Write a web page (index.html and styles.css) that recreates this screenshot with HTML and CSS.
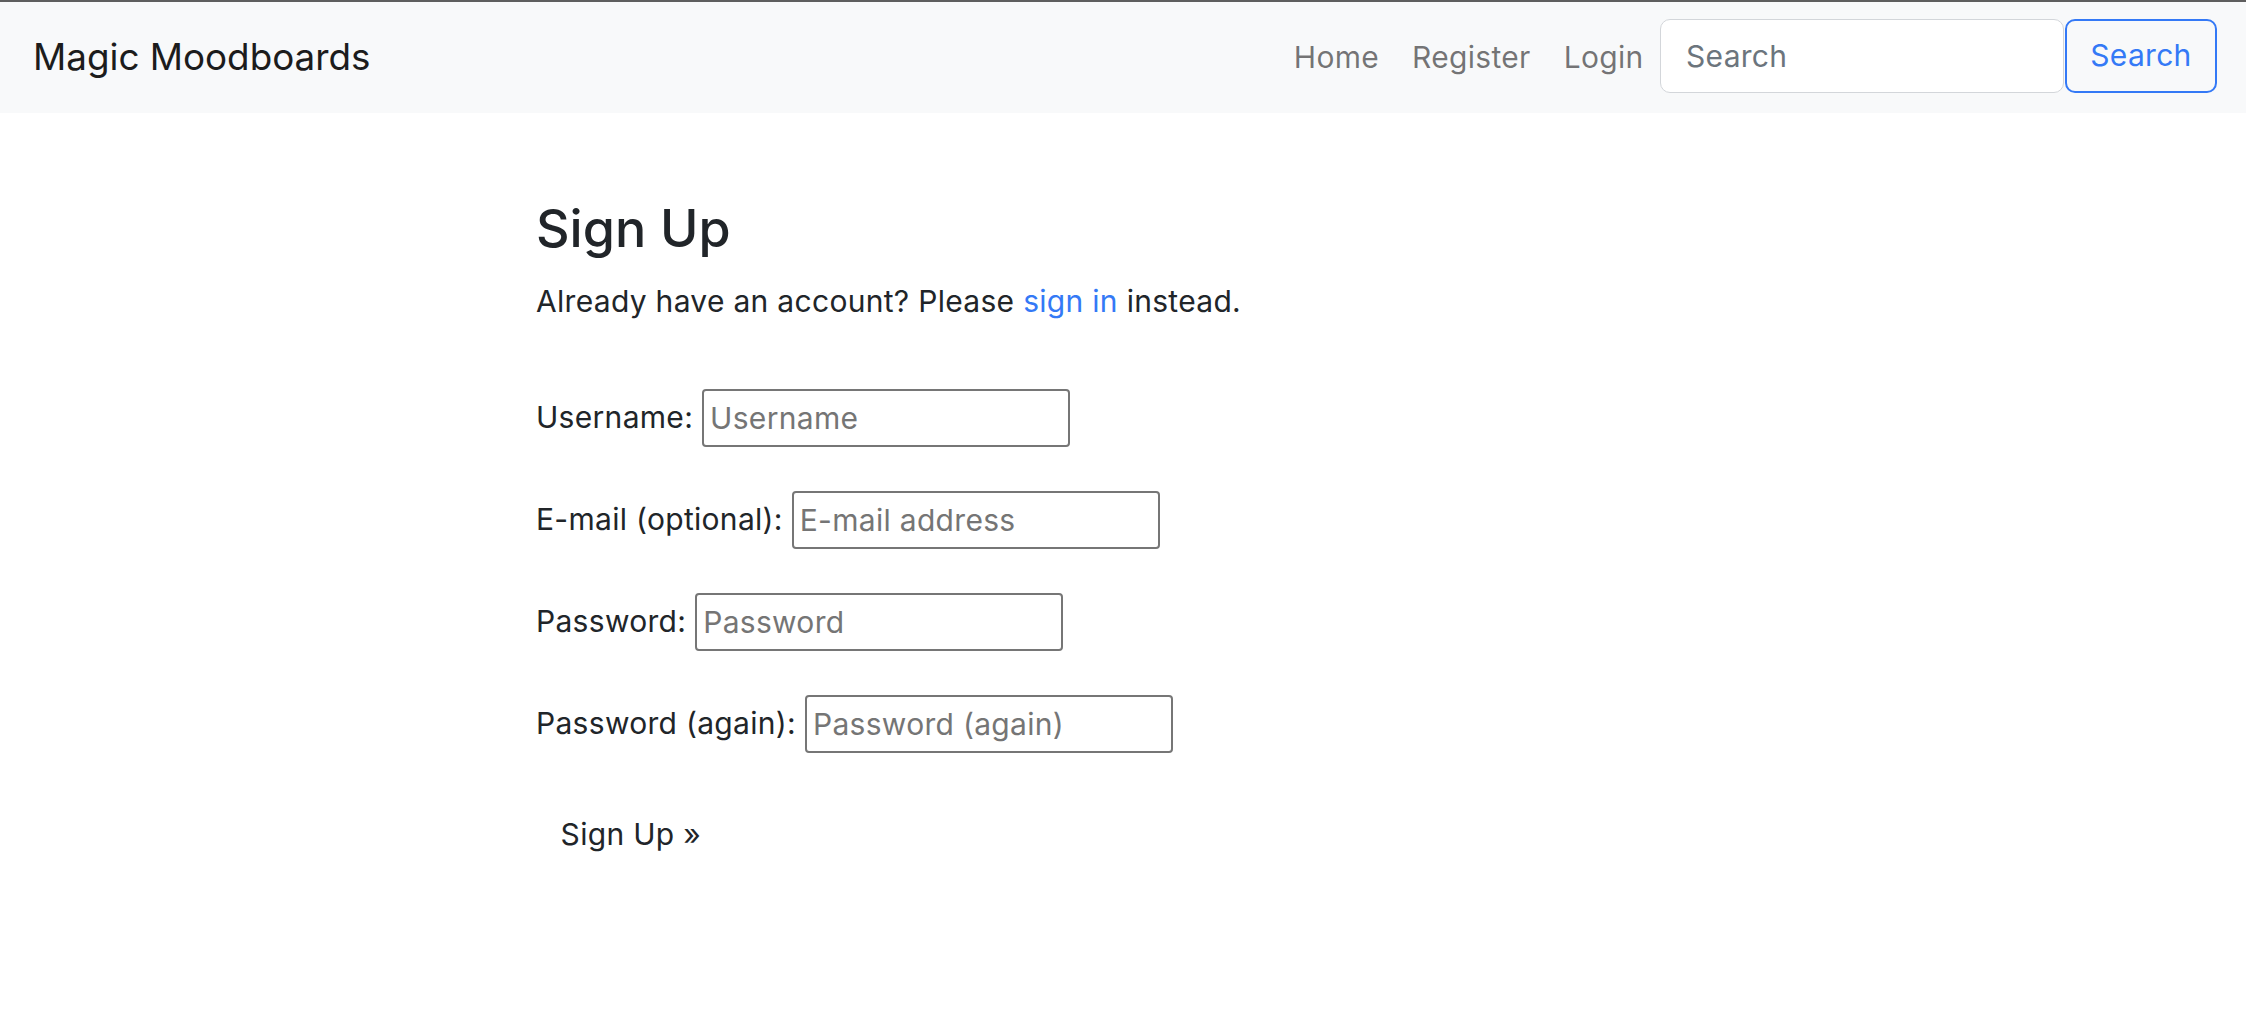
FILE: index.html
```html
<!DOCTYPE html>
<html lang="en">
<head>
<meta charset="utf-8">
<title>Sign Up - Magic Moodboards</title>
<link rel="stylesheet" href="styles.css">
</head>
<body>
<nav class="navbar">
  <a class="brand" href="#">Magic Moodboards</a>
  <div class="nav-right">
    <ul class="nav-links">
      <li><a href="#">Home</a></li>
      <li><a href="#">Register</a></li>
      <li><a href="#">Login</a></li>
    </ul>
    <form class="search">
      <input class="search-input" type="search" placeholder="Search">
      <button class="search-btn" type="button">Search</button>
    </form>
  </div>
</nav>
<main class="content">
  <h3 class="title">Sign Up</h3>
  <p class="lead">Already have an account? Please <a href="#">sign in</a> instead.</p>
  <form class="signup">
    <div class="field"><label for="u">Username:</label><input id="u" type="text" placeholder="Username"></div>
    <div class="field"><label for="e">E-mail (optional):</label><input id="e" type="email" placeholder="E-mail address"></div>
    <div class="field"><label for="p1">Password:</label><input id="p1" type="password" placeholder="Password"></div>
    <div class="field"><label for="p2">Password (again):</label><input id="p2" type="password" placeholder="Password (again)"></div>
    <div class="actions"><button class="submit" type="button">Sign Up &raquo;</button></div>
  </form>
</main>
</body>
</html>
```

FILE: styles.css
```css
* { box-sizing: border-box; }

body {
  margin: 0;
  border-top: 2px solid #5e5e5e;
  font-family: Inter, "Liberation Sans", sans-serif;
  font-size: 30px;
  letter-spacing: 0.3px;
  line-height: 1.44;
  color: #212529;
  background: #fff;
}

.navbar {
  height: 111px;
  background: #f8f9fa;
  display: flex;
  align-items: center;
  padding: 0 29px 0 33px;
}

.brand {
  font-size: 36.8px;
  letter-spacing: 0;
  color: #1c1c1c;
  text-decoration: none;
}

.nav-right {
  margin-left: auto;
  display: flex;
  align-items: center;
}

.nav-links {
  list-style: none;
  margin: 0;
  padding: 0;
  display: flex;
}

.nav-links a {
  display: block;
  padding: 0 16.5px;
  color: rgba(0, 0, 0, 0.55);
  text-decoration: none;
}

.search {
  display: flex;
  margin: 0 0 4px 0;
}

.search-input {
  width: 404px;
  height: 74px;
  border: 1.5px solid #d3d6da;
  border-radius: 10px;
  padding: 0 25px;
  font: inherit;
  letter-spacing: inherit;
  color: #212529;
  background: #fff;
  outline: none;
}
.search-input::placeholder { color: #6c757d; }

.search-btn {
  width: 152px;
  height: 74px;
  margin-left: 1px;
  border: 2px solid #3479f6;
  border-radius: 10px;
  background: transparent;
  color: #3479f6;
  font: inherit;
  letter-spacing: inherit;
}

.content {
  padding: 86px 0 0 536px;
}

.title {
  margin: 0 0 21px 0;
  font-size: 52px;
  font-weight: 500;
  letter-spacing: 0;
  line-height: 1.15;
}

.lead {
  margin: 0 0 66px 0;
}

.lead a {
  color: #3479f6;
  text-decoration: none;
}

.signup {
  display: flex;
  flex-direction: column;
  gap: 44px;
}

.field {
  display: flex;
  align-items: center;
  gap: 9px;
  height: 58px;
}

.field input {
  width: 368px;
  height: 58px;
  border: 2px solid #767676;
  border-radius: 4px;
  padding: 0 6px;
  font: inherit;
  letter-spacing: inherit;
  color: #212529;
  background: #fff;
}
.field input::placeholder { color: #757575; }

.actions {
  margin-top: 3px;
}

.submit {
  border: 1.8px solid transparent;
  background: transparent;
  padding: 10.8px 21.6px 10.8px 23.6px;
  font: inherit;
  letter-spacing: inherit;
  color: #212529;
  line-height: 1.5;
}
```
